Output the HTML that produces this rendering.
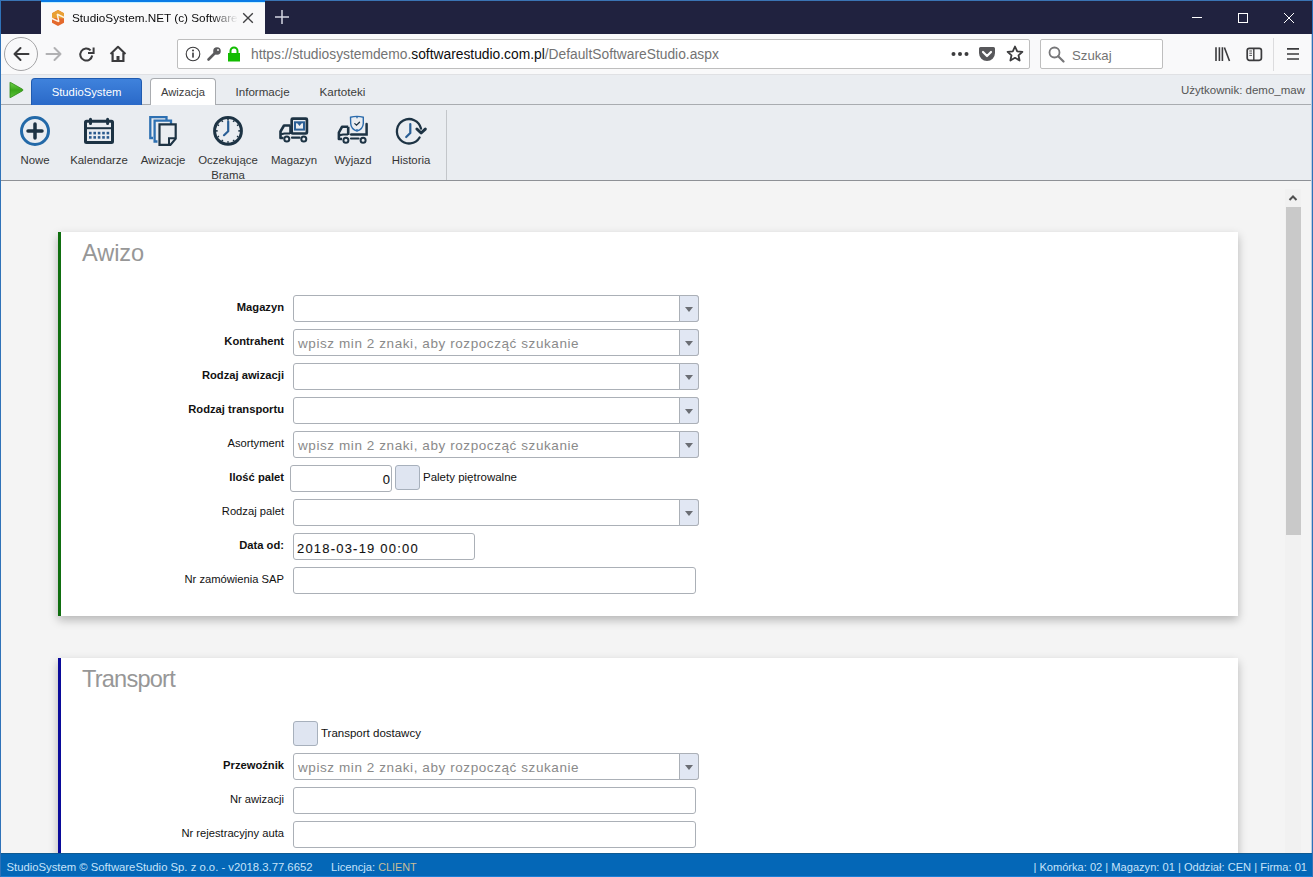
<!DOCTYPE html>
<html><head><meta charset="utf-8">
<style>
*{box-sizing:border-box;margin:0;padding:0}
html,body{width:1313px;height:877px;overflow:hidden;background:#f4f4f4;font-family:"Liberation Sans",sans-serif}
.a{position:absolute}
#titlebar{left:0;top:0;width:1313px;height:34px;background:#20223f}
#winborder-top{left:0;top:0;width:1313px;height:1px;background:#3a74b4}
#tab{left:41px;top:0;width:224px;height:34px;background:#f9f9fa}
#tabline{left:41px;top:0;width:224px;height:3px;background:linear-gradient(#0a7be6 0,#0a7be6 2px,#c6f1ff 2px)}
#nav{left:0;top:34px;width:1313px;height:41px;background:#f9f9fa;border-bottom:1px solid #e0e1e4}
.urlbar{background:#fff;border:1px solid #bebebe;border-radius:2px}
#appbar{left:0;top:75px;width:1313px;height:30px;background:#eaedf1;border-bottom:1px solid #a9acb0}
#ribbon{left:0;top:105px;width:1313px;height:76px;background:#eaedf1;border-bottom:1px solid #8e9196}
#content{left:0;top:181px;width:1313px;height:672px;background:#f4f4f4}
#status{left:0;top:853px;width:1313px;height:24px;background:#0467b7;border-top:1px solid #0f5a92;border-bottom:1px solid #1b7fd6;color:#d7e8f7;font-size:11.2px}
.card{background:#fff;box-shadow:0 4px 9px rgba(0,0,0,0.26)}
.lbl{position:absolute;font-size:11.2px;color:#111;text-align:right;white-space:nowrap}
.b{font-weight:bold}
.inp{position:absolute;background:#fff;border:1px solid #abb0b7;border-radius:3px}
.dd{position:absolute;top:-1px;right:-1px;width:20px;height:27px;background:#e1e7f3;border:1px solid #abb0b7;border-radius:0 3px 3px 0}
.dd:after{content:"";position:absolute;left:5px;top:11px;border-left:4.5px solid transparent;border-right:4.5px solid transparent;border-top:5px solid #6b6e74}
.ph{position:absolute;left:4px;top:6px;font-size:13.5px;letter-spacing:0.58px;color:#8a8a8a;white-space:nowrap}
.chk{position:absolute;width:25px;height:25px;background:#dfe5f1;border:1px solid #a7b0bc;border-radius:3px}
.rl{position:absolute;font-size:11.4px;color:#353535;text-align:center;white-space:nowrap}
.val{position:absolute;top:5px;font-size:13px;line-height:1;color:#111;white-space:nowrap;-webkit-text-stroke:0.1px #111}
</style></head><body>
<!-- browser chrome -->
<div id="titlebar" class="a"></div>
<div id="winborder-top" class="a"></div>
<div id="tab" class="a"></div>
<div id="tabline" class="a"></div>
<div id="nav" class="a"></div>
<!-- tab content -->
<svg class="a" style="left:51px;top:9px" width="14" height="18" viewBox="0 0 14 18">
  <polygon points="7,1 13,4.3 13,13.7 7,17 1,13.7 1,4.3" fill="#e4692c"/>
  <polygon points="7,1 13,4.3 13,9.5 1,9 1,4.3" fill="#e9a033"/>
  <path d="M13.5,8.6 L6.3,5.2 L7.8,12.6 L0.5,9.2" fill="none" stroke="#fdf3e4" stroke-width="1.5" stroke-linejoin="bevel"/>
</svg>
<div class="a" style="left:72px;top:12px;width:168px;font-size:11.75px;line-height:1;color:#0c0c0d;white-space:nowrap;overflow:hidden;-webkit-mask-image:linear-gradient(to right,#000 140px,transparent 166px)">StudioSystem.NET (c) Software Studio</div>
<svg class="a" style="left:242px;top:12px" width="12" height="12" viewBox="0 0 12 12"><path d="M1.2,1.2 L10.8,10.8 M10.8,1.2 L1.2,10.8" stroke="#404042" stroke-width="1.35"/></svg>
<svg class="a" style="left:274px;top:9px" width="16" height="16" viewBox="0 0 16 16"><path d="M8,1 V15 M1,8 H15" stroke="#d4d6e4" stroke-width="1.5"/></svg>
<!-- window controls -->
<svg class="a" style="left:1190px;top:10px" width="110" height="16" viewBox="0 0 110 16">
  <path d="M2,7.5 H12" stroke="#fff" stroke-width="1"/>
  <rect x="48.5" y="3.5" width="9" height="9" fill="none" stroke="#fff" stroke-width="1"/>
  <path d="M94,3 L104,13 M104,3 L94,13" stroke="#fff" stroke-width="1"/>
</svg>
<!-- nav buttons -->
<div class="a" style="left:4px;top:37px;width:34px;height:34px;border:1px solid #a4a4a6;border-radius:50%;background:#f9f9fa"></div>
<svg class="a" style="left:12px;top:46px" width="18" height="16" viewBox="0 0 18 16"><path d="M16.5,8 H2.5 M8.5,2 L2.5,8 L8.5,14" fill="none" stroke="#3b3b3d" stroke-width="2" stroke-linecap="round" stroke-linejoin="round"/></svg>
<svg class="a" style="left:45px;top:46px" width="18" height="16" viewBox="0 0 18 16"><path d="M1.5,8 H15.5 M9.5,2 L15.5,8 L9.5,14" fill="none" stroke="#b1b1b3" stroke-width="2" stroke-linecap="round" stroke-linejoin="round"/></svg>
<svg class="a" style="left:78px;top:46px" width="18" height="17" viewBox="0 0 18 17"><path d="M14.2,9.5 A6,6 0 1 1 12.6,4.4" fill="none" stroke="#3b3b3d" stroke-width="2"/><path d="M15.6,1.5 V7 H10" fill="none" stroke="#3b3b3d" stroke-width="2"/></svg>
<svg class="a" style="left:109px;top:45px" width="18" height="18" viewBox="0 0 18 18"><path d="M1.5,9 L9,1.8 L16.5,9" fill="none" stroke="#3b3b3d" stroke-width="2" stroke-linejoin="round"/><path d="M3.6,7.8 V16 H14.4 V7.8" fill="none" stroke="#3b3b3d" stroke-width="2.2"/><rect x="7.5" y="11" width="3" height="5" fill="#3b3b3d"/></svg>
<!-- url bar -->
<div class="a urlbar" style="left:177px;top:39px;width:853px;height:30px"></div>
<svg class="a" style="left:185px;top:46px" width="16" height="16" viewBox="0 0 16 16"><circle cx="8" cy="8" r="6.8" fill="none" stroke="#3b3b3d" stroke-width="1.1"/><rect x="7.2" y="6.6" width="1.6" height="5" fill="#3b3b3d"/><circle cx="8" cy="4.6" r="1" fill="#3b3b3d"/></svg>
<svg class="a" style="left:206px;top:46px" width="16" height="16" viewBox="0 0 16 16"><circle cx="11" cy="5" r="3.8" fill="#5b5b5d"/><path d="M9,7 L2.5,13.5" stroke="#5b5b5d" stroke-width="2.6" stroke-linecap="round"/><circle cx="12" cy="4" r="0.9" fill="#fff"/></svg>
<svg class="a" style="left:227px;top:46px" width="14" height="16" viewBox="0 0 14 16"><path d="M3.5,7 V5 A3.5,3.5 0 0 1 10.5,5 V7" fill="none" stroke="#12bc00" stroke-width="2"/><rect x="1" y="7" width="12" height="8.5" fill="#12bc00"/></svg>
<div class="a" style="left:251px;top:48px;font-size:13.8px;line-height:1;white-space:nowrap;color:#737373">https://studiosystemdemo.<span style="color:#0c0c0d">softwarestudio.com.pl</span>/DefaultSoftwareStudio.aspx</div>
<svg class="a" style="left:950.5px;top:51px" width="18" height="6" viewBox="0 0 18 6"><circle cx="2.5" cy="3" r="2" fill="#3b3b3d"/><circle cx="9" cy="3" r="2" fill="#3b3b3d"/><circle cx="15.5" cy="3" r="2" fill="#3b3b3d"/></svg>
<svg class="a" style="left:978px;top:46px" width="18" height="16" viewBox="0 0 18 16"><path d="M2.5,1 H15.5 A1.5,1.5 0 0 1 17,2.5 V7 A8,8 0 0 1 1,7 V2.5 A1.5,1.5 0 0 1 2.5,1 Z" fill="#58585b"/><path d="M5,6 L9,10 L13,6" fill="none" stroke="#fff" stroke-width="2.2" stroke-linecap="round" stroke-linejoin="round"/></svg>
<svg class="a" style="left:1006px;top:45px" width="18" height="18" viewBox="0 0 18 18"><path d="M9,1.5 L11.2,6.3 L16.4,6.8 L12.5,10.3 L13.6,15.5 L9,12.8 L4.4,15.5 L5.5,10.3 L1.6,6.8 L6.8,6.3 Z" fill="none" stroke="#3b3b3d" stroke-width="1.8" stroke-linejoin="round"/></svg>
<div class="a urlbar" style="left:1040px;top:39px;width:123px;height:30px"></div>
<svg class="a" style="left:1048px;top:46px" width="18" height="17" viewBox="0 0 18 17"><circle cx="6.5" cy="6.5" r="5" fill="none" stroke="#767678" stroke-width="1.8"/><path d="M10.2,10.2 L15.5,15.5" stroke="#767678" stroke-width="2.2" stroke-linecap="round"/></svg>
<div class="a" style="left:1072px;top:48.5px;font-size:13.2px;line-height:1;color:#737373">Szukaj</div>
<svg class="a" style="left:1213px;top:46px" width="20" height="16" viewBox="0 0 20 16"><path d="M3,1.2 V15 M6.4,1.2 V15 M9.4,1.2 V15 M11.4,1.5 L16.5,15" fill="none" stroke="#3b3b3d" stroke-width="1.6"/></svg>
<svg class="a" style="left:1245px;top:46px" width="18" height="16" viewBox="0 0 18 16"><rect x="2.2" y="2.3" width="14.2" height="12" rx="2.2" fill="none" stroke="#3b3b3d" stroke-width="1.7"/><path d="M8.8,2.3 V14.3" stroke="#3b3b3d" stroke-width="1.4"/><path d="M4.3,5 H7 M4.3,7.2 H7 M4.3,9.4 H7" stroke="#3b3b3d" stroke-width="0.9"/></svg>
<div class="a" style="left:1273px;top:38px;width:1px;height:33px;background:#dcdcde"></div>
<svg class="a" style="left:1284px;top:46px" width="18" height="16" viewBox="0 0 18 16"><path d="M3,2.9 H15 M3,8 H15 M3,13 H15" stroke="#3b3b3d" stroke-width="1.7"/></svg>

<div id="appbar" class="a"></div>
<svg class="a" style="left:8px;top:81px" width="16" height="18" viewBox="0 0 16 18"><defs><linearGradient id="gp" x1="0" y1="0" x2="0" y2="1"><stop offset="0" stop-color="#6fd04a"/><stop offset="0.5" stop-color="#3aa61a"/><stop offset="1" stop-color="#5cc23a"/></linearGradient></defs><path d="M2,2 Q1.5,1 2.8,1.6 L14.5,8.2 Q15.5,9 14.5,9.8 L2.8,16.4 Q1.5,17 2,16 Z" fill="url(#gp)" stroke="#2e8a16" stroke-width="0.8"/></svg>
<div class="a" style="left:31px;top:78px;width:111px;height:27px;border-radius:4px 4px 0 0;background:linear-gradient(#3f82dc,#2a69c8);border:1px solid #1f5bb0;border-bottom:none"></div>
<div class="a" style="left:31px;top:86.5px;width:111px;text-align:center;font-size:11.3px;line-height:1;color:#fff">StudioSystem</div>
<div class="a" style="left:150px;top:78px;width:66px;height:28px;border-radius:4px 4px 0 0;background:#fff;border:1px solid #a9acb0;border-bottom:none"></div>
<div class="a" style="left:150px;top:86.5px;width:66px;text-align:center;font-size:11.2px;line-height:1;color:#3c3c3c">Awizacja</div>
<div class="a" style="left:235.5px;top:86.2px;font-size:11.6px;line-height:1;color:#3c3c3c">Informacje</div>
<div class="a" style="left:319.5px;top:86.2px;font-size:11.6px;line-height:1;color:#3c3c3c">Kartoteki</div>
<div class="a" style="right:8px;top:85.3px;font-size:11.5px;line-height:1;color:#555">Użytkownik: demo_maw</div>
<div id="ribbon" class="a"></div>
<div class="a" style="left:446px;top:110px;width:1px;height:70px;background:#c3c6ca"></div>
<!-- ribbon icons -->
<svg class="a" style="left:14px;top:110px" width="42" height="42" viewBox="14 110 42 42">
  <circle cx="35" cy="131" r="13.5" fill="none" stroke="#2369a8" stroke-width="3"/>
  <path d="M35,124 V138 M28,131 H42" stroke="#1d3344" stroke-width="3.5" stroke-linecap="round"/>
</svg>
<svg class="a" style="left:78px;top:110px" width="42" height="42" viewBox="78 110 42 42">
  <rect x="85.5" y="121.3" width="27" height="21.2" rx="1" fill="none" stroke="#1d3344" stroke-width="3"/>
  <path d="M85.5,128.2 H112.5" stroke="#1d3344" stroke-width="2"/>
  <path d="M90.5,119.2 V123.5 M107.6,119.2 V123.5" stroke="#1d3344" stroke-width="3" stroke-linecap="round"/>
  <g fill="#2b5a8e">
   <rect x="89" y="131.8" width="2.6" height="2.6"/><rect x="93.4" y="131.8" width="2.6" height="2.6"/><rect x="97.8" y="131.8" width="2.6" height="2.6"/><rect x="102.2" y="131.8" width="2.6" height="2.6"/><rect x="106.6" y="131.8" width="2.6" height="2.6"/>
   <rect x="89" y="136.1" width="2.6" height="2.6"/><rect x="93.4" y="136.1" width="2.6" height="2.6"/><rect x="97.8" y="136.1" width="2.6" height="2.6"/><rect x="102.2" y="136.1" width="2.6" height="2.6"/><rect x="106.6" y="136.1" width="2.6" height="2.6"/>
  </g>
</svg>
<svg class="a" style="left:142px;top:110px" width="42" height="42" viewBox="142 110 42 42">
  <path d="M153,138 H150.3 V117.1 H166.5 V120.5" fill="none" stroke="#2d70b2" stroke-width="2.3"/>
  <path d="M157.5,141.5 H154.6 V120.7 H171 V124.3" fill="none" stroke="#2d70b2" stroke-width="2.3"/>
  <path d="M159.5,124.4 H175.7 V138.6 L170.4,144.9 H159.5 Z" fill="none" stroke="#1d3344" stroke-width="2.2" stroke-linejoin="miter"/>
  <path d="M169,144.5 V138.2 H175.5" fill="none" stroke="#1d3344" stroke-width="2"/>
</svg>
<svg class="a" style="left:206px;top:110px" width="42" height="42" viewBox="206 110 42 42">
  <circle cx="228" cy="130.9" r="13.4" fill="none" stroke="#1d3344" stroke-width="3"/>
  <g stroke="#1d3344" stroke-width="1.6">
   <path d="M228,119 V120.5 M228,141.3 V142.8 M216.1,130.9 H217.6 M238.4,130.9 H239.9 M222,120.6 L222.7,121.9 M234,120.6 L233.3,121.9 M222,141.2 L222.7,139.9 M234,141.2 L233.3,139.9 M217.7,124.9 L219,125.6 M217.7,136.9 L219,136.2 M238.3,124.9 L237,125.6 M238.3,136.9 L237,136.2"/>
  </g>
  <path d="M228.2,121.5 V131.3 L224,135.2" fill="none" stroke="#2a5f96" stroke-width="2.2" stroke-linecap="round" stroke-linejoin="round"/>
</svg>
<svg class="a" style="left:272px;top:110px" width="42" height="42" viewBox="272 110 42 42">
  <rect x="291.7" y="118.7" width="15.2" height="14.8" rx="1" fill="none" stroke="#1d3344" stroke-width="2.7"/>
  <rect x="295" y="122.3" width="9" height="7.3" fill="none" stroke="#2b5f96" stroke-width="2"/>
  <path d="M297.5,122.3 L299.5,125 L301.5,122.3" fill="#2b5f96" stroke="#2b5f96" stroke-width="1.2"/>
  <path d="M290.5,125.5 H284 L280.5,131.5 V138 H283.5" fill="none" stroke="#1d3344" stroke-width="2.6" stroke-linejoin="round"/>
  <path d="M281,134.3 L284.5,133.5 H290" fill="none" stroke="#1d3344" stroke-width="2.2"/>
  <path d="M290.5,125.5 V134" stroke="#1d3344" stroke-width="2.6"/>
  <circle cx="286.8" cy="139" r="2.5" fill="none" stroke="#1d3344" stroke-width="2"/>
  <circle cx="303.8" cy="139" r="2.5" fill="none" stroke="#1d3344" stroke-width="2"/>
  <path d="M292,137.7 H299.5" stroke="#1d3344" stroke-width="2.2" stroke-linecap="round"/>
</svg>
<svg class="a" style="left:332px;top:110px" width="42" height="42" viewBox="332 110 42 42">
  <path d="M350.5,117.2 Q357,115.5 363.3,117.2 V123.5 Q363,129 357,131.2 Q351,129 350.7,123.5 Z" fill="none" stroke="#2b6bac" stroke-width="1.4"/>
  <path d="M357,116.5 V118.2 M357,129 V131" stroke="#2b6bac" stroke-width="1.4"/>
  <path d="M354.8,123.6 L356.5,125.2 L359.5,122.2" fill="none" stroke="#1d3344" stroke-width="1.3" stroke-linecap="round"/>
  <path d="M348.2,126.8 H342 L338.9,132.5 V139 H342" fill="none" stroke="#1d3344" stroke-width="2.6" stroke-linejoin="round"/>
  <path d="M339.5,135.3 L343,134.5 H348" fill="none" stroke="#1d3344" stroke-width="2.2"/>
  <path d="M348.2,126.8 V135" stroke="#1d3344" stroke-width="2.6"/>
  <path d="M351.2,134.6 H366.6 V124" fill="none" stroke="#1d3344" stroke-width="2.5" stroke-linecap="round"/>
  <circle cx="345.9" cy="140.3" r="2.5" fill="none" stroke="#1d3344" stroke-width="2"/>
  <circle cx="363.1" cy="140.3" r="2.5" fill="none" stroke="#1d3344" stroke-width="2"/>
  <path d="M351,138.5 H358.5" stroke="#1d3344" stroke-width="2.2" stroke-linecap="round"/>
</svg>
<svg class="a" style="left:390px;top:110px" width="42" height="42" viewBox="390 110 42 42">
  <path d="M419.6,137.5 A12.2,12.2 0 1 1 421,128.6" fill="none" stroke="#1d3344" stroke-width="2.3" stroke-linecap="round"/>
  <path d="M416.9,129 L421.1,133 L425.3,129.1" fill="none" stroke="#1d3344" stroke-width="3" stroke-linecap="round" stroke-linejoin="round"/>
  <path d="M410.3,124 V133 L406.2,137" fill="none" stroke="#2a5f96" stroke-width="2.2" stroke-linecap="round" stroke-linejoin="round"/>
</svg>
<!-- ribbon labels -->
<div class="rl" style="left:5px;width:60px;top:154.6px;line-height:1">Nowe</div>
<div class="rl" style="left:69px;width:60px;top:154.6px;line-height:1">Kalendarze</div>
<div class="rl" style="left:133px;width:60px;top:154.6px;line-height:1">Awizacje</div>
<div class="rl" style="left:193px;width:70px;top:154.6px;line-height:1">Oczekujące</div>
<div class="rl" style="left:193px;width:70px;top:169.6px;line-height:1">Brama</div>
<div class="rl" style="left:264px;width:60px;top:154.6px;line-height:1">Magazyn</div>
<div class="rl" style="left:323px;width:60px;top:154.6px;line-height:1">Wyjazd</div>
<div class="rl" style="left:381px;width:60px;top:154.6px;line-height:1">Historia</div>
<div id="content" class="a"></div>

<!-- card 1 -->
<div class="a card" style="left:58px;top:232px;width:1180px;height:384px;border-left:3px solid #0f6e0f"></div>
<!-- card 2 -->
<div class="a card" style="left:58px;top:658px;width:1180px;height:260px;border-left:3px solid #0a0a9a"></div>


<div class="a" style="left:82px;top:242px;font-size:23.6px;letter-spacing:-0.1px;line-height:1;color:#979797">Awizo</div>
<div class="a" style="left:82px;top:668px;font-size:23.6px;letter-spacing:-0.8px;line-height:1;color:#979797">Transport</div>
<div class="lbl" style="left:423px;top:472.3px;font-size:11.5px;line-height:1">Palety piętrowalne</div>
<div class="chk" style="left:293px;top:721px"></div>
<div class="lbl" style="left:321px;top:728.3px;font-size:11.5px;line-height:1">Transport dostawcy</div>
<div class="lbl b" style="right:1029px;top:301.52px;line-height:1">Magazyn</div>
<div class="inp" style="left:293px;top:295px;width:406px;height:27px"><div class="dd"></div></div>
<div class="lbl b" style="right:1029px;top:335.52px;line-height:1">Kontrahent</div>
<div class="inp" style="left:293px;top:329px;width:406px;height:27px"><div class="ph">wpisz min 2 znaki, aby rozpocząć szukanie</div><div class="dd"></div></div>
<div class="lbl b" style="right:1029px;top:369.52px;line-height:1">Rodzaj awizacji</div>
<div class="inp" style="left:293px;top:363px;width:406px;height:27px"><div class="dd"></div></div>
<div class="lbl b" style="right:1029px;top:403.52px;line-height:1">Rodzaj transportu</div>
<div class="inp" style="left:293px;top:397px;width:406px;height:27px"><div class="dd"></div></div>
<div class="lbl" style="right:1029px;top:437.52px;line-height:1">Asortyment</div>
<div class="inp" style="left:293px;top:431px;width:406px;height:27px"><div class="ph">wpisz min 2 znaki, aby rozpocząć szukanie</div><div class="dd"></div></div>
<div class="lbl b" style="right:1029px;top:471.52px;line-height:1">Ilość palet</div>
<div class="inp" style="left:290px;top:465px;width:102px;height:27px"><div class="val" style="right:1px;top:7px">0</div></div>
<div class="chk" style="left:395px;top:465px"></div>
<div class="lbl" style="right:1029px;top:505.52px;line-height:1">Rodzaj palet</div>
<div class="inp" style="left:293px;top:499px;width:406px;height:27px"><div class="dd"></div></div>
<div class="lbl b" style="right:1029px;top:539.52px;line-height:1">Data od:</div>
<div class="inp" style="left:293px;top:533px;width:182px;height:27px"><div class="val" style="left:3px;top:7.5px;letter-spacing:1.2px">2018-03-19 00:00</div></div>
<div class="lbl" style="right:1029px;top:573.52px;line-height:1">Nr zamówienia SAP</div>
<div class="inp" style="left:293px;top:567px;width:403px;height:27px"></div>
<div class="lbl b" style="right:1029px;top:759.52px;line-height:1">Przewoźnik</div>
<div class="inp" style="left:293px;top:753px;width:406px;height:27px"><div class="ph">wpisz min 2 znaki, aby rozpocząć szukanie</div><div class="dd"></div></div>
<div class="lbl" style="right:1029px;top:793.52px;line-height:1">Nr awizacji</div>
<div class="inp" style="left:293px;top:787px;width:403px;height:27px"></div>
<div class="lbl" style="right:1029px;top:827.52px;line-height:1">Nr rejestracyjny auta</div>
<div class="inp" style="left:293px;top:821px;width:403px;height:27px"></div>
<!-- scrollbar -->
<div class="a" style="left:1285px;top:189px;width:16px;height:664px;background:#f1f1f1"></div>
<svg class="a" style="left:1288px;top:194px" width="10" height="8" viewBox="0 0 10 8"><path d="M1.5,6 L5,2.5 L8.5,6" fill="none" stroke="#505050" stroke-width="2"/></svg>
<div class="a" style="left:1286px;top:207px;width:15px;height:328px;background:#c9c9c9"></div>
<div id="status" class="a"></div>
<div class="a" style="left:6.5px;top:861.5px;font-size:11.3px;line-height:1;color:#c6e3fa;white-space:nowrap">StudioSystem © SoftwareStudio Sp. z o.o. - v2018.3.77.6652</div>
<div class="a" style="left:331px;top:861.5px;font-size:11.2px;line-height:1;color:#c6e3fa;white-space:nowrap">Licencja: <span style="color:#c9bd97;font-size:10.8px">CLIENT</span></div>
<div class="a" style="right:6px;top:861.5px;font-size:11.1px;line-height:1;color:#c6e3fa;white-space:nowrap">| Komórka: 02 | Magazyn: 01 | Oddział: CEN | Firma: 01</div>
<!-- window border -->
<div class="a" style="left:0;top:0;width:1px;height:877px;background:#2f72b8"></div>
<div class="a" style="right:0;top:0;width:1px;height:877px;background:#2f72b8"></div><div class="a" style="right:1px;top:34px;width:1px;height:819px;background:#b9cde3"></div>
</body></html>
